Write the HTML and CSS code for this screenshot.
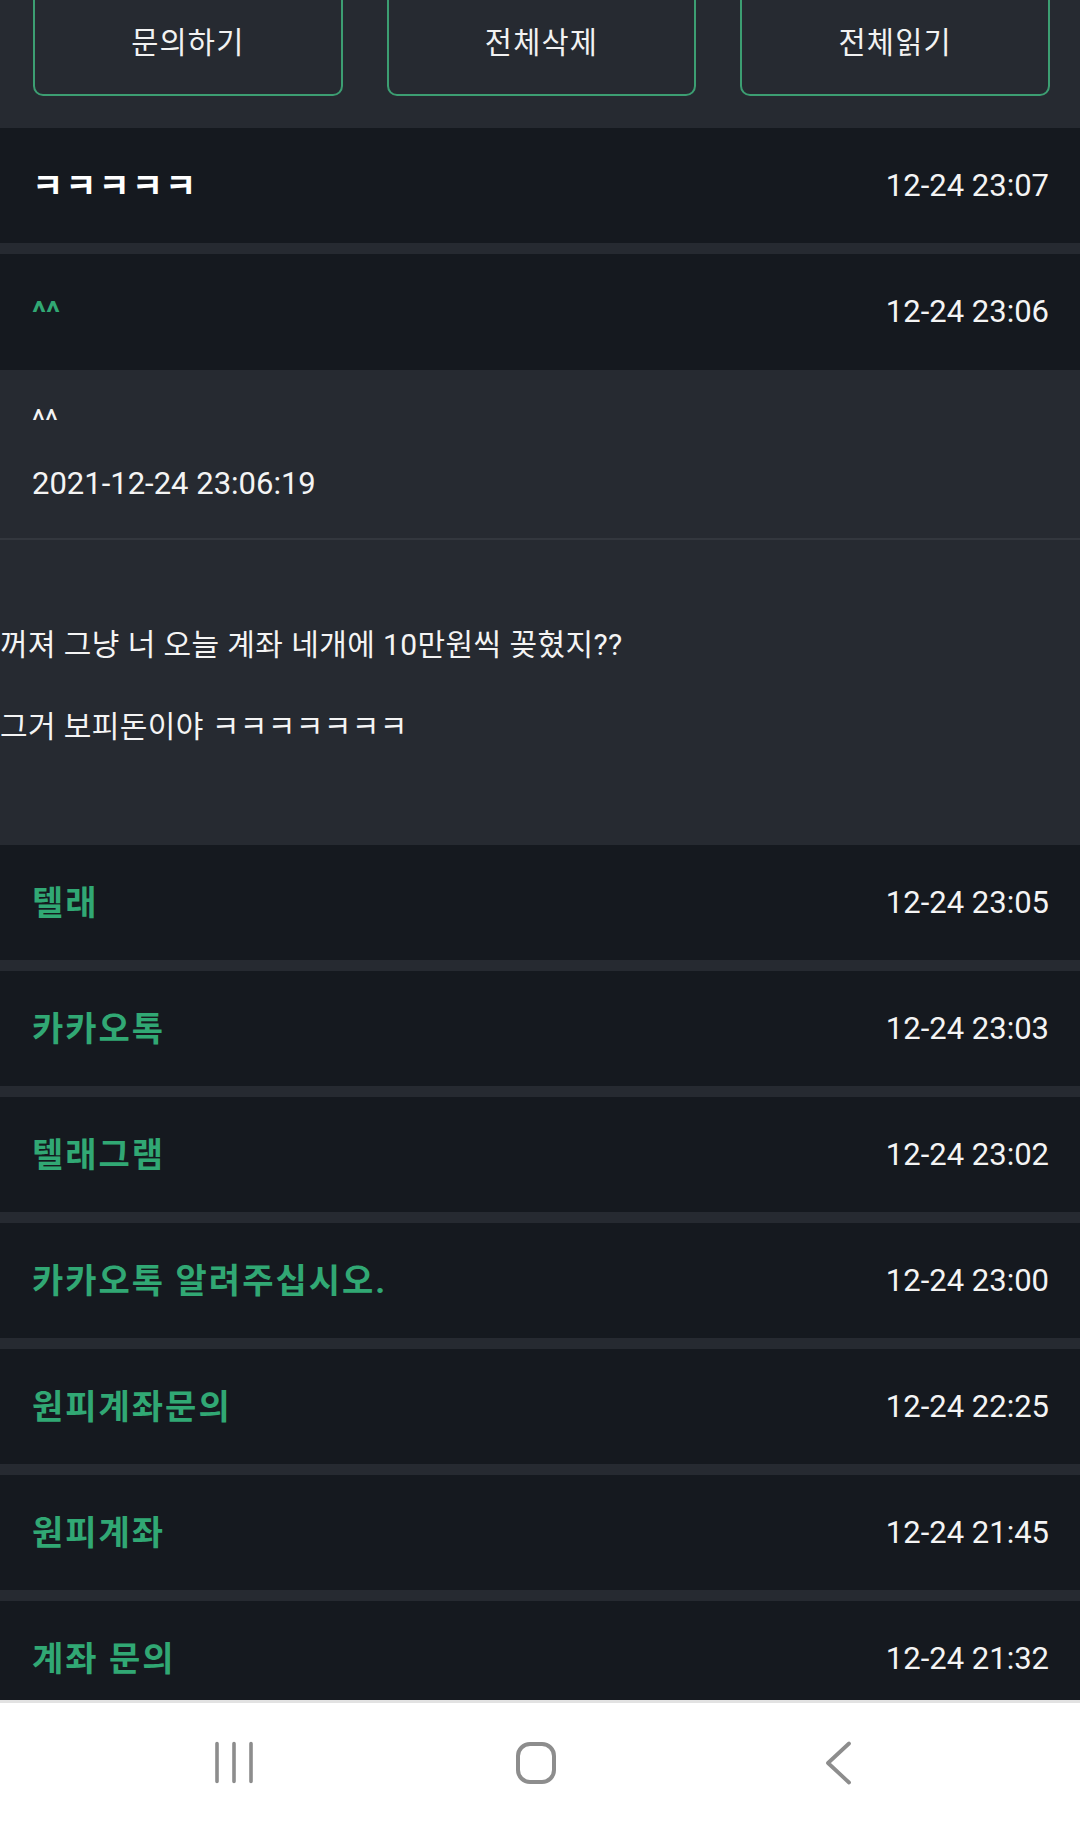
FILE: index.html
```html
<!DOCTYPE html>
<html lang="ko">
<head>
<meta charset="utf-8">
<title>문의</title>
<link rel="stylesheet" href="styles.css">
</head>
<body>
<div class="screen">
  <main class="content">
    <div class="actions">
      <button class="action">문의하기</button>
      <button class="action">전체삭제</button>
      <button class="action">전체읽기</button>
    </div>
    <div class="list">
      <div class="row"><span class="title title-read">ㅋㅋㅋㅋㅋ</span><span class="date">12-24 23:07</span></div>
      <div class="row row-open"><span class="title title-caret">^^</span><span class="date">12-24 23:06</span></div>
      <div class="detail">
        <div class="detail-head">
          <div class="detail-line">^^</div>
          <div class="detail-line">2021-12-24 23:06:19</div>
        </div>
        <div class="detail-body">꺼져 그냥 너 오늘 계좌 네개에 10만원씩 꽂혔지??<br><br>그거 보피돈이야 ㅋㅋㅋㅋㅋㅋㅋ</div>
      </div>
      <div class="row"><span class="title">텔래</span><span class="date">12-24 23:05</span></div>
      <div class="row"><span class="title">카카오톡</span><span class="date">12-24 23:03</span></div>
      <div class="row"><span class="title">텔래그램</span><span class="date">12-24 23:02</span></div>
      <div class="row"><span class="title">카카오톡 알려주십시오.</span><span class="date">12-24 23:00</span></div>
      <div class="row"><span class="title">원피계좌문의</span><span class="date">12-24 22:25</span></div>
      <div class="row"><span class="title">원피계좌</span><span class="date">12-24 21:45</span></div>
      <div class="row"><span class="title">계좌 문의</span><span class="date">12-24 21:32</span></div>
    </div>
  </main>
  <nav class="navbar">
    <div class="nav-cell">
      <svg class="nav-icon" width="40" height="44" viewBox="0 0 40 44">
        <path d="M3 2.5v38M20 2.5v38M37 2.5v38" fill="none" stroke="#8d8d8d" stroke-width="3.6" stroke-linecap="round"/>
      </svg>
    </div>
    <div class="nav-cell">
      <svg class="nav-icon" width="44" height="46" viewBox="0 0 44 46">
        <rect x="4" y="4" width="36" height="38" rx="12" ry="12" fill="none" stroke="#8d8d8d" stroke-width="4"/>
      </svg>
    </div>
    <div class="nav-cell">
      <svg class="nav-icon" width="32" height="46" viewBox="0 0 32 46">
        <path d="M27 3.5L6 23l21 19.5" fill="none" stroke="#8d8d8d" stroke-width="3.8" stroke-linecap="round" stroke-linejoin="round"/>
      </svg>
    </div>
  </nav>
</div>
</body>
</html>
```

FILE: styles.css
```css
* {
  box-sizing: border-box;
}

html, body {
  margin: 0;
  padding: 0;
}

body {
  background: #262a31;
  font-family: Roboto, "Noto Sans CJK KR", sans-serif;
  color: #f2f2f2;
}

.screen {
  width: 1080px;
  height: 1826px;
  display: flex;
  flex-direction: column;
  overflow: hidden;
}

.content {
  flex: 1;
  min-height: 0;
  overflow: hidden;
  background: #262a31;
}

.actions {
  height: 128px;
  display: flex;
  align-items: flex-end;
  gap: 44px;
  padding: 0 30px 32px 33px;
  overflow: hidden;
}

.action {
  flex: 1;
  height: 112px;
  flex-shrink: 0;
  border: 2px solid #3c9e72;
  border-radius: 10px;
  background: transparent;
  color: #f2f2f2;
  font-family: Roboto, "Noto Sans CJK KR", sans-serif;
  font-size: 29.5px;
  letter-spacing: 1.2px;
  font-weight: 400;
  display: flex;
  align-items: center;
  justify-content: center;
  padding: 0;
}

.list {
  display: flex;
  flex-direction: column;
}

.row {
  height: 115px;
  flex-shrink: 0;
  background: #15191f;
  display: flex;
  align-items: center;
  justify-content: space-between;
  padding: 0 31px 0 32px;
  margin-bottom: 11px;
}

.row-open {
  height: 116px;
  margin-bottom: 0;
}

.title {
  font-family: Roboto, "Noto Sans CJK KR", sans-serif;
  font-size: 34px;
  letter-spacing: 2px;
  font-weight: 700;
  color: #31a874;
  line-height: 40px;
}

.title-caret {
  font-size: 32px;
  letter-spacing: 0;
}

.title-read {
  color: #ffffff;
}

.date {
  font-family: Roboto, sans-serif;
  font-size: 31px;
  color: #f4f4f4;
  line-height: 40px;
}

.detail {
  background: #262a31;
  flex-shrink: 0;
}

.detail-head {
  padding: 31px 32px 34px;
  display: flex;
  flex-direction: column;
  gap: 23px;
  border-bottom: 2px solid #33373e;
}

.detail-line {
  font-size: 31px;
  line-height: 40px;
  color: #f4f4f4;
}

.detail-body {
  padding: 84px 0 98px 0;
  font-size: 30px;
  letter-spacing: 0.4px;
  line-height: 41px;
  color: #f4f4f4;
}

.navbar {
  height: 126px;
  flex-shrink: 0;
  background: #ffffff;
  border-top: 3px solid #e2e2e2;
  display: grid;
  grid-template-columns: repeat(3, 302px);
  justify-content: center;
  align-items: center;
  padding: 0 8px 0 0;
}

.nav-cell {
  display: flex;
  justify-content: center;
  align-items: center;
  padding-bottom: 4px;
}

.nav-icon {
  display: block;
}
```
